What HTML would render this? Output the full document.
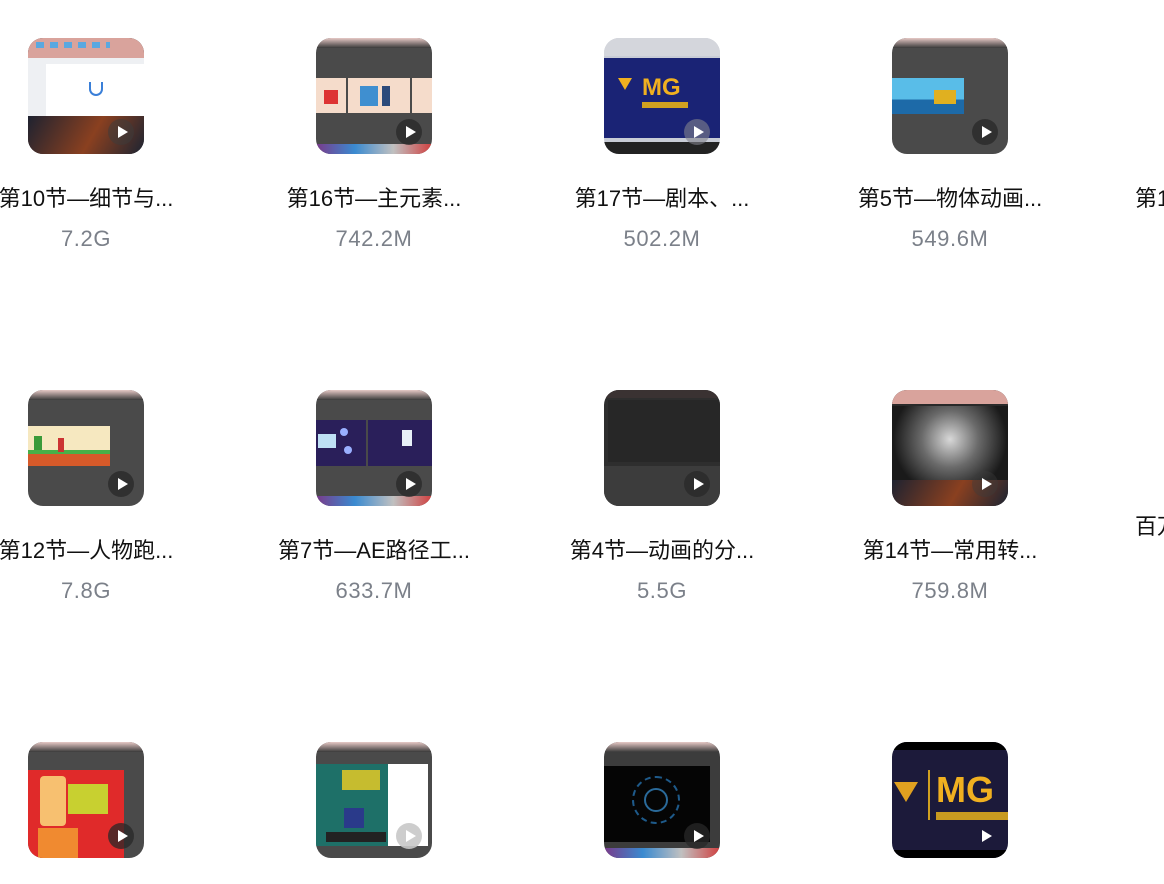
<!DOCTYPE html>
<html><head><meta charset="utf-8"><style>
html,body{margin:0;padding:0;background:#fff;width:1164px;height:884px;overflow:hidden;position:relative;font-family:"Liberation Sans","Noto Sans CJK SC",sans-serif}
.t{position:absolute;width:116px;height:116px;border-radius:15px;overflow:hidden;background:#4a4a4a}
.t div{position:absolute}
.p{width:26px;height:26px;border-radius:50%;background:rgba(40,40,40,.75);left:80px;top:81px}
.p:after{content:"";position:absolute;left:10px;top:7px;border-left:10px solid #fff;border-top:6px solid transparent;border-bottom:6px solid transparent}
.bar{left:0;top:0;width:116px;height:10px;background:linear-gradient(#e7c9c6,#3a3a3a)}
.ti{position:absolute;width:288px;text-align:center;font-size:22px;color:#111;white-space:nowrap;line-height:24px}
.sz{position:absolute;width:288px;text-align:center;font-size:22px;letter-spacing:0.6px;color:#7b8089;line-height:24px}
</style></head><body>

<!-- row 1 -->
<div class="t" style="left:28px;top:38px;background:#2a2a30">
 <div style="left:0;top:0;width:116px;height:20px;background:#d9a39c"></div>
 <div style="left:8px;top:4px;width:74px;height:6px;background:repeating-linear-gradient(90deg,#5aa8e0 0 8px,transparent 8px 14px)"></div>
 <div style="left:0;top:20px;width:116px;height:58px;background:#eef0f3"></div>
 <div style="left:18px;top:26px;width:98px;height:52px;background:#fff"></div>
 <div style="left:61px;top:44px;width:10px;height:12px;border:2px solid #3a7fd8;border-top:none;border-radius:0 0 8px 8px"></div>
 <div style="left:0;top:78px;width:116px;height:38px;background:linear-gradient(120deg,#1e2230,#8a4020 55%,#1c2432)"></div>
 <div class="p" style="background:rgba(60,60,60,.5)"></div>
</div>
<div class="t" style="left:316px;top:38px;background:#4a4a4a">
 <div class="bar"></div>
 <div style="left:0;top:40px;width:116px;height:35px;background:#f5dccb"></div>
 <div style="left:30px;top:40px;width:2px;height:35px;background:#4a4a4a"></div>
 <div style="left:94px;top:40px;width:2px;height:35px;background:#4a4a4a"></div>
 <div style="left:8px;top:52px;width:14px;height:14px;background:#d33"></div>
 <div style="left:44px;top:48px;width:18px;height:20px;background:#3f8fd0"></div>
 <div style="left:66px;top:48px;width:8px;height:20px;background:#2c4a7a"></div>
 <div style="left:0;top:106px;width:116px;height:10px;background:linear-gradient(90deg,#7a3a8a,#3a8ad0,#c0c0c0,#d04040)"></div>
 <div class="p"></div>
</div>
<div class="t" style="left:604px;top:38px;background:#c8ccd6">
 <div style="left:0;top:0;width:116px;height:18px;background:#d4d6dc"></div>
 <div style="left:0;top:20px;width:116px;height:80px;background:#1a2375"></div>
 <div style="left:14px;top:40px;width:0;height:0;border-left:7px solid transparent;border-right:7px solid transparent;border-top:12px solid #f0b020"></div>
 <div style="left:38px;top:38px;font:bold 24px 'Liberation Sans',sans-serif;color:#f0b020;line-height:24px">MG</div>
 <div style="left:38px;top:64px;width:46px;height:6px;background:#d0a020"></div>
 <div style="left:0;top:104px;width:116px;height:12px;background:#222"></div>
 <div class="p" style="background:rgba(130,130,140,.6)"></div>
</div>
<div class="t" style="left:892px;top:38px;background:#4a4a4a">
 <div class="bar"></div>
 <div style="left:0;top:40px;width:72px;height:36px;background:linear-gradient(#59bde8 0 60%,#1d6aa8 60%)"></div>
 <div style="left:42px;top:52px;width:22px;height:14px;background:#e0b020"></div>
 <div class="p"></div>
</div>

<div class="ti" style="left:-58px;top:187px">第10节—细节与...</div>
<div class="sz" style="left:-58px;top:227px">7.2G</div>
<div class="ti" style="left:230px;top:187px">第16节—主元素...</div>
<div class="sz" style="left:230px;top:227px">742.2M</div>
<div class="ti" style="left:518px;top:187px">第17节—剧本、...</div>
<div class="sz" style="left:518px;top:227px">502.2M</div>
<div class="ti" style="left:806px;top:187px">第5节—物体动画...</div>
<div class="sz" style="left:806px;top:227px">549.6M</div>
<div class="ti" style="left:1135px;top:187px;width:auto;text-align:left">第1</div>

<!-- row 2 -->
<div class="t" style="left:28px;top:390px;background:#4a4a4a">
 <div class="bar"></div>
 <div style="left:0;top:36px;width:82px;height:40px;background:#f6e8c0"></div>
 <div style="left:0;top:64px;width:82px;height:12px;background:#d65a2a"></div>
 <div style="left:0;top:60px;width:82px;height:4px;background:#48b048"></div>
 <div style="left:6px;top:46px;width:8px;height:14px;background:#3a9a3a"></div>
 <div style="left:30px;top:48px;width:6px;height:14px;background:#c33"></div>
 <div class="p"></div>
</div>
<div class="t" style="left:316px;top:390px;background:#4a4a4a">
 <div class="bar"></div>
 <div style="left:0;top:30px;width:116px;height:46px;background:#2a1f5a"></div>
 <div style="left:50px;top:30px;width:2px;height:46px;background:#4a4a4a"></div>
 <div style="left:2px;top:44px;width:18px;height:14px;background:#bfe0f5"></div>
 <div style="left:24px;top:38px;width:8px;height:8px;border-radius:50%;background:#9ab0ff"></div>
 <div style="left:28px;top:56px;width:8px;height:8px;border-radius:50%;background:#9ab0ff"></div>
 <div style="left:86px;top:40px;width:10px;height:16px;background:#e8f0f8"></div>
 <div style="left:0;top:106px;width:116px;height:10px;background:linear-gradient(90deg,#7a3a8a,#3a8ad0,#c0c0c0,#d04040)"></div>
 <div class="p"></div>
</div>
<div class="t" style="left:604px;top:390px;background:#2e2e2e">
 <div style="left:0;top:0;width:116px;height:8px;background:#3a3232"></div>
 <div style="left:4px;top:10px;width:112px;height:62px;background:#272727"></div>
 <div style="left:0;top:76px;width:116px;height:40px;background:#3c3c3c"></div>
 <div class="p"></div>
</div>
<div class="t" style="left:892px;top:390px;background:#2a2a2a">
 <div style="left:0;top:0;width:116px;height:14px;background:#d9a39c"></div>
 <div style="left:0;top:16px;width:116px;height:74px;background:radial-gradient(circle at 50% 45%,#d8d8d8,#6a6a6a 40%,#1a1a1a 80%)"></div>
 <div style="left:0;top:90px;width:116px;height:26px;background:linear-gradient(120deg,#1e2230,#8a4020 55%,#1c2432)"></div>
 <div class="p" style="background:rgba(60,60,60,.4)"></div>
</div>

<div class="ti" style="left:-58px;top:539px">第12节—人物跑...</div>
<div class="sz" style="left:-58px;top:579px">7.8G</div>
<div class="ti" style="left:230px;top:539px">第7节—AE路径工...</div>
<div class="sz" style="left:230px;top:579px">633.7M</div>
<div class="ti" style="left:518px;top:539px">第4节—动画的分...</div>
<div class="sz" style="left:518px;top:579px">5.5G</div>
<div class="ti" style="left:806px;top:539px">第14节—常用转...</div>
<div class="sz" style="left:806px;top:579px">759.8M</div>
<div class="ti" style="left:1135px;top:515px;width:auto;text-align:left">百万</div>

<!-- row 3 -->
<div class="t" style="left:28px;top:742px;background:#4a4a4a">
 <div class="bar"></div>
 <div style="left:0;top:28px;width:96px;height:88px;background:#e02a2a"></div>
 <div style="left:12px;top:34px;width:26px;height:50px;background:#f7c070;border-radius:4px"></div>
 <div style="left:40px;top:42px;width:40px;height:30px;background:#c8d030"></div>
 <div style="left:10px;top:86px;width:40px;height:30px;background:#f08a30"></div>
 <div class="p"></div>
</div>
<div class="t" style="left:316px;top:742px;background:#4a4a4a">
 <div class="bar"></div>
 <div style="left:0;top:22px;width:72px;height:82px;background:#1e7068"></div>
 <div style="left:72px;top:22px;width:40px;height:82px;background:#fff"></div>
 <div style="left:26px;top:28px;width:38px;height:20px;background:#f0d020;opacity:.8"></div>
 <div style="left:28px;top:66px;width:20px;height:20px;background:#2a3a8a"></div>
 <div style="left:10px;top:90px;width:60px;height:10px;background:#222"></div>
 <div class="p" style="background:rgba(200,200,200,.9)"></div>
</div>
<div class="t" style="left:604px;top:742px;background:#3c3c3c">
 <div class="bar"></div>
 <div style="left:0;top:24px;width:106px;height:76px;background:#050505"></div>
 <div style="left:28px;top:34px;width:44px;height:44px;border-radius:50%;border:2px dashed #1e5a8a"></div>
 <div style="left:40px;top:46px;width:20px;height:20px;border-radius:50%;border:2px solid #2a6a9a"></div>
 <div style="left:0;top:106px;width:116px;height:10px;background:linear-gradient(90deg,#7a3a8a,#3a8ad0,#c0c0c0,#d04040)"></div>
 <div class="p"></div>
</div>
<div class="t" style="left:892px;top:742px;background:#1c1a3a">
 <div style="left:0;top:0;width:116px;height:8px;background:#000"></div>
 <div style="left:2px;top:40px;width:0;height:0;border-left:12px solid transparent;border-right:12px solid transparent;border-top:20px solid #e0a020"></div>
 <div style="left:36px;top:28px;width:2px;height:50px;background:#d0a020"></div>
 <div style="left:44px;top:30px;font:bold 36px 'Liberation Sans',sans-serif;color:#f0b020;line-height:36px">MG</div>
 <div style="left:44px;top:70px;width:72px;height:8px;background:#c89a20"></div>
 <div style="left:0;top:108px;width:116px;height:8px;background:#000"></div>
 <div class="p" style="background:transparent"></div>
</div>

</body></html>
